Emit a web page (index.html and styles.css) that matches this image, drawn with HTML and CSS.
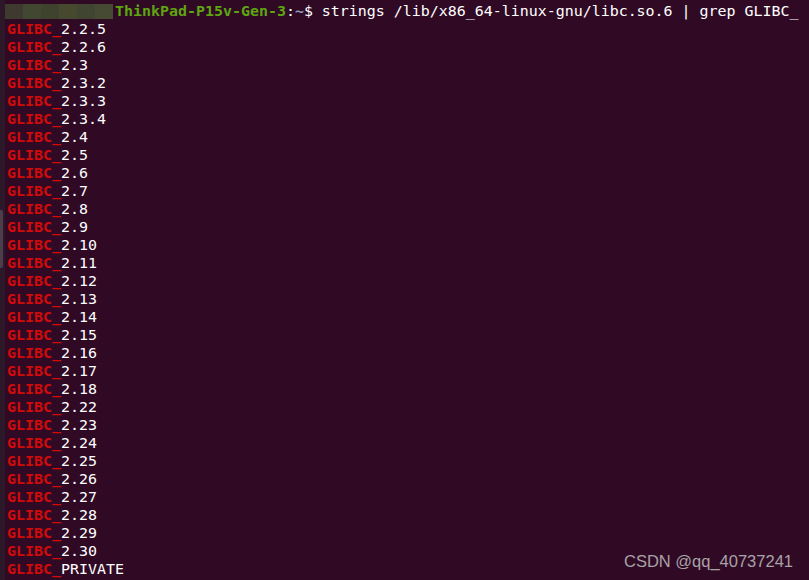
FILE: index.html
```html
<!DOCTYPE html>
<html>
    <head>
        <title>Terminal</title>
        <link rel="stylesheet" href="styles.css">
    </head>
    <body>
        <div class="window">
            <div class="edge"><div class="thumb"></div></div>
            <pre class="term"><span class="hidden"></span><span class="host">ThinkPad-P15v-Gen-3</span>:<span class="path">~</span>$ strings /lib/x86_64-linux-gnu/libc.so.6 | grep GLIBC_
<span class="hit">GLIBC_</span>2.2.5
<span class="hit">GLIBC_</span>2.2.6
<span class="hit">GLIBC_</span>2.3
<span class="hit">GLIBC_</span>2.3.2
<span class="hit">GLIBC_</span>2.3.3
<span class="hit">GLIBC_</span>2.3.4
<span class="hit">GLIBC_</span>2.4
<span class="hit">GLIBC_</span>2.5
<span class="hit">GLIBC_</span>2.6
<span class="hit">GLIBC_</span>2.7
<span class="hit">GLIBC_</span>2.8
<span class="hit">GLIBC_</span>2.9
<span class="hit">GLIBC_</span>2.10
<span class="hit">GLIBC_</span>2.11
<span class="hit">GLIBC_</span>2.12
<span class="hit">GLIBC_</span>2.13
<span class="hit">GLIBC_</span>2.14
<span class="hit">GLIBC_</span>2.15
<span class="hit">GLIBC_</span>2.16
<span class="hit">GLIBC_</span>2.17
<span class="hit">GLIBC_</span>2.18
<span class="hit">GLIBC_</span>2.22
<span class="hit">GLIBC_</span>2.23
<span class="hit">GLIBC_</span>2.24
<span class="hit">GLIBC_</span>2.25
<span class="hit">GLIBC_</span>2.26
<span class="hit">GLIBC_</span>2.27
<span class="hit">GLIBC_</span>2.28
<span class="hit">GLIBC_</span>2.29
<span class="hit">GLIBC_</span>2.30
<span class="hit">GLIBC_</span>PRIVATE</pre>
            <div class="mark">CSDN @qq_40737241</div>
        </div>
    </body>
</html>
```

FILE: styles.css
```css
*{
    padding: 0;
    margin: 0;
}
html, body{
    width: 809px;
    height: 580px;
    overflow: hidden;
    background-color: #300a24;
}
.window{
    position: relative;
    display: flex;
    height: 580px;
}
.edge{
    width: 5px;
    flex: none;
    background-color: #2c1828;
    padding-top: 210px;
}
.thumb{
    width: 3px;
    height: 58px;
    background-color: #4d3c4a;
    border-radius: 0 2px 2px 0;
}
.term{
    flex: 1;
    padding-top: 2px;
    padding-left: 2px;
    font-family: "DejaVu Sans Mono", "Liberation Mono", monospace;
    font-size: 14.95px;
    line-height: 18px;
    color: #ffffff;
}
.hidden{
    display: inline-block;
    width: 108px;
    height: 15px;
    margin-left: -2px;
    margin-right: 2px;
    vertical-align: -3px;
    background: linear-gradient(to right,
        #3e3a30 0 18px, #414730 18px 36px, #3d432c 36px 54px,
        #47492e 54px 72px, #3f4530 72px 90px, #474a33 90px 108px);
}
.host{
    color: #5ea512;
    font-weight: bold;
}
.path{
    color: #8c9fc2;
    font-weight: bold;
}
.hit{
    color: #d10a0a;
    font-weight: bold;
}
.mark{
    position: absolute;
    right: 16px;
    bottom: 9px;
    font-family: "Liberation Sans", Arial, sans-serif;
    font-size: 16.5px;
    color: #a9a2a8;
}
```
